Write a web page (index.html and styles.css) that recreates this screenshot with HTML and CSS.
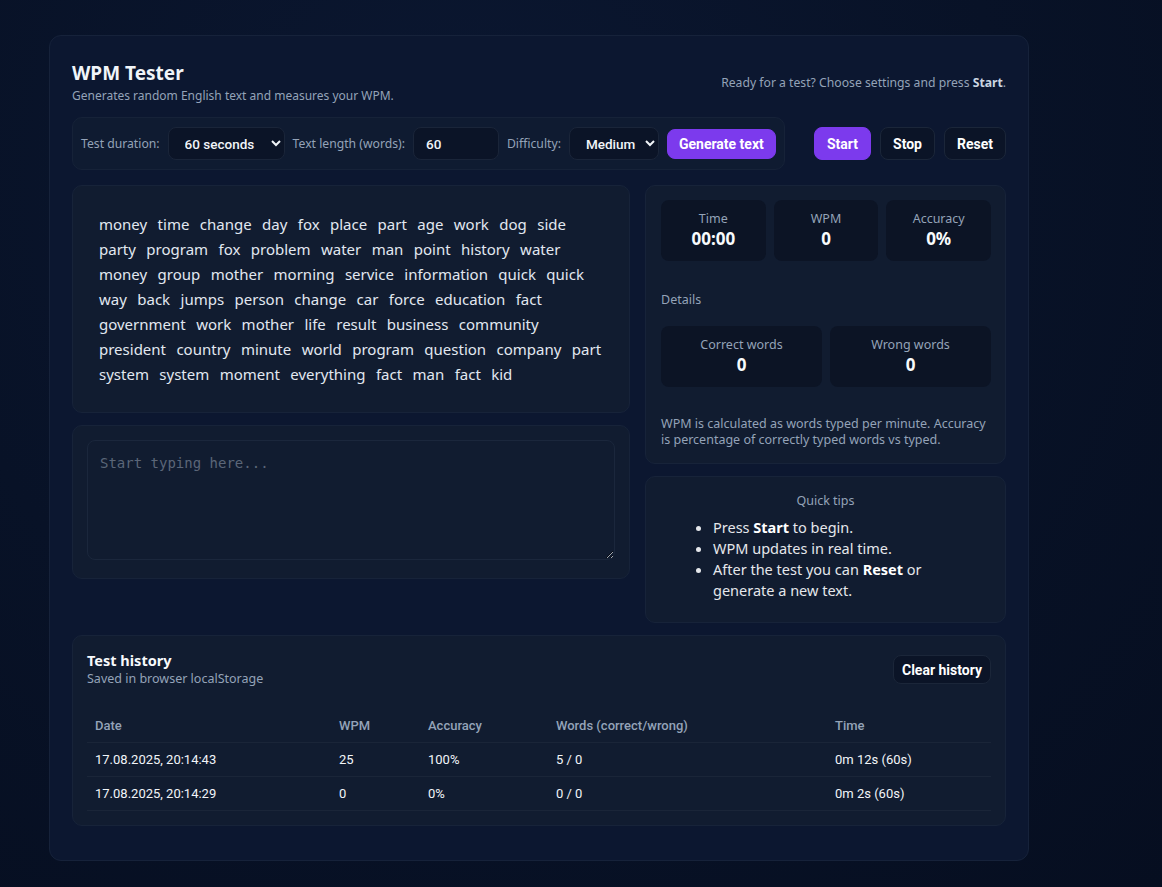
FILE: index.html
```html
<!DOCTYPE html>
<html lang="en">
<head>
<meta charset="utf-8">
<title>WPM Tester</title>
<link rel="stylesheet" href="styles.css">
</head>
<body>
<div class="app">
  <header class="head">
    <div>
      <h1 class="title">WPM Tester</h1>
      <p class="subtitle">Generates random English text and measures your WPM.</p>
    </div>
    <p class="status">Ready for a test? Choose settings and press <b>Start</b>.</p>
  </header>

  <div class="toolbar">
    <div class="controls">
      <label class="lbl">Test duration:</label>
      <select class="field sel-dur"><option>60 seconds</option></select>
      <label class="lbl">Text length (words):</label>
      <input class="field inp-len" type="text" value="60">
      <label class="lbl">Difficulty:</label>
      <select class="field sel-diff"><option>Medium</option></select>
      <button class="btn primary gen">Generate text</button>
    </div>
    <div class="actions">
      <button class="btn primary">Start</button>
      <button class="btn ghost">Stop</button>
      <button class="btn ghost">Reset</button>
    </div>
  </div>

  <div class="grid">
    <div class="col">
      <div class="panel words">
        <span>money</span> <span>time</span> <span>change</span> <span>day</span> <span>fox</span> <span>place</span> <span>part</span> <span>age</span> <span>work</span> <span>dog</span> <span>side</span>
        <span>party</span> <span>program</span> <span>fox</span> <span>problem</span> <span>water</span> <span>man</span> <span>point</span> <span>history</span> <span>water</span>
        <span>money</span> <span>group</span> <span>mother</span> <span>morning</span> <span>service</span> <span>information</span> <span>quick</span> <span>quick</span>
        <span>way</span> <span>back</span> <span>jumps</span> <span>person</span> <span>change</span> <span>car</span> <span>force</span> <span>education</span> <span>fact</span>
        <span>government</span> <span>work</span> <span>mother</span> <span>life</span> <span>result</span> <span>business</span> <span>community</span>
        <span>president</span> <span>country</span> <span>minute</span> <span>world</span> <span>program</span> <span>question</span> <span>company</span> <span>part</span>
        <span>system</span> <span>system</span> <span>moment</span> <span>everything</span> <span>fact</span> <span>man</span> <span>fact</span> <span>kid</span>
      </div>
      <div class="panel typing">
        <textarea class="ta" placeholder="Start typing here..."></textarea>
      </div>
    </div>

    <div class="col">
      <div class="panel stats">
        <div class="stat-row three">
          <div class="stat"><div class="s-lbl">Time</div><div class="s-val">00:00</div></div>
          <div class="stat"><div class="s-lbl">WPM</div><div class="s-val">0</div></div>
          <div class="stat"><div class="s-lbl">Accuracy</div><div class="s-val">0%</div></div>
        </div>
        <div class="details">Details</div>
        <div class="stat-row two">
          <div class="stat"><div class="s-lbl">Correct words</div><div class="s-val">0</div></div>
          <div class="stat"><div class="s-lbl">Wrong words</div><div class="s-val">0</div></div>
        </div>
        <p class="note">WPM is calculated as words typed per minute. Accuracy is percentage of correctly typed words vs typed.</p>
      </div>
      <div class="panel tips">
        <div class="tips-title">Quick tips</div>
        <ul class="tips-list">
          <li>Press <b>Start</b> to begin.</li>
          <li>WPM updates in real time.</li>
          <li>After the test you can <b>Reset</b> or generate a new text.</li>
        </ul>
      </div>
    </div>
  </div>

  <div class="panel history">
    <div class="hist-head">
      <div>
        <div class="hist-title">Test history</div>
        <div class="hist-sub">Saved in browser localStorage</div>
      </div>
      <button class="btn ghost clear">Clear history</button>
    </div>
    <table class="tbl">
      <thead>
        <tr><th class="c-date">Date</th><th class="c-wpm">WPM</th><th class="c-acc">Accuracy</th><th class="c-words">Words (correct/wrong)</th><th>Time</th></tr>
      </thead>
      <tbody>
        <tr><td>17.08.2025, 20:14:43</td><td>25</td><td>100%</td><td>5 / 0</td><td>0m 12s (60s)</td></tr>
        <tr><td>17.08.2025, 20:14:29</td><td>0</td><td>0%</td><td>0 / 0</td><td>0m 2s (60s)</td></tr>
      </tbody>
    </table>
  </div>
</div>
</body>
</html>
```

FILE: styles.css
```css
* { box-sizing: border-box; }
html, body { height: 100%; }
body {
  margin: 0;
  background: radial-gradient(ellipse at 40% 20%, #0b1731 0%, #081227 55%, #060e20 100%);
  color: #e5e7eb;
  font-family: "Noto Sans", "Open Sans", sans-serif;
  padding: 35px 133px 27px 49px;
}
.app {
  width: 980px;
  background: #0c1730;
  border: 1px solid #16223a;
  border-radius: 12px;
  padding: 23px 22px 34px 22px;
}
.head {
  display: flex;
  justify-content: space-between;
  align-items: center;
}
.title {
  margin: 0;
  font-size: 19px;
  font-weight: 700;
  line-height: 28px;
  color: #f1f5f9;
}
.subtitle {
  margin: 1px 0 0;
  font-size: 12px;
  line-height: 16px;
  color: #94a3b8;
}
.status {
  margin: 2px 0 0;
  font-size: 12.2px;
  color: #94a3b8;
}
.status b { color: #cbd5e1; }

.toolbar {
  margin-top: 13px;
  display: flex;
  justify-content: space-between;
  align-items: center;
}
.controls {
  display: flex;
  align-items: center;
  gap: 8px;
  background: #0f1b31;
  border: 1px solid #162238;
  border-radius: 10px;
  padding: 9px 8px 9px 8px;
}
.lbl {
  font-size: 12.2px;
  color: #94a3b8;
}
.field {
  height: 33px;
  background: #0b1427;
  border: 1px solid #1a2539;
  border-radius: 8px;
  color: #f1f5f9;
  font-family: Roboto, "Noto Sans", sans-serif;
  font-size: 13.5px;
  font-weight: 500;
  padding: 0 4px 0 12px;
}
.sel-dur { width: 117px; }
.inp-len { width: 86px; }
.sel-diff { width: 90px; }
.btn {
  font-family: Roboto, "Noto Sans", sans-serif;
  font-size: 14px;
  font-weight: 700;
  height: 33px;
  border-radius: 8px;
  padding: 0 12px;
  color: #ffffff;
  cursor: pointer;
}
.primary {
  background: #7c3aed;
  border: 1px solid #7c3aed;
}
.gen { height: 30px; padding: 0 11px; }
.ghost {
  background: #0b1427;
  border: 1px solid #1b2639;
}
.actions {
  display: flex;
  gap: 9px;
}

.grid {
  margin-top: 15px;
  display: grid;
  grid-template-columns: 1fr 361px;
  gap: 15px;
}
.col {
  display: flex;
  flex-direction: column;
  gap: 12px;
}
.panel {
  background: #111c30;
  border: 1px solid #172339;
  border-radius: 10px;
}
.words {
  padding: 26px 22px 25px 26px;
  font-size: 15px;
  line-height: 25px;
  color: #e2e8f0;
  word-spacing: 6.5px;
}
.typing {
  padding: 14px 14px 18px;
}
.ta {
  display: block;
  width: 100%;
  height: 120px;
  background: #111c30;
  border: 1px solid #1b273c;
  border-radius: 8px;
  color: #e5e7eb;
  font-family: "DejaVu Sans Mono", "Liberation Mono", monospace;
  font-size: 14px;
  padding: 14px 12px;
  resize: vertical;
}
.ta::placeholder { color: #5b6678; }

.stats {
  padding: 14px 14px 15px 15px;
}
.stat-row {
  display: grid;
  gap: 8px;
}
.three { grid-template-columns: 1fr 1fr 1fr; }
.two { grid-template-columns: 1fr 1fr; }
.stat {
  background: #0c1425;
  border-radius: 8px;
  height: 61px;
  text-align: center;
  padding-top: 10px;
}
.s-lbl {
  font-size: 12.5px;
  line-height: 18px;
  color: #94a3b8;
}
.s-val {
  font-size: 17px;
  line-height: 22px;
  font-weight: 700;
  color: #f8fafc;
}
.details {
  font-size: 12.5px;
  color: #94a3b8;
  margin: 30px 0 17px;
  line-height: 18px;
}
.note {
  margin: 29px 0 0;
  font-size: 12.5px;
  line-height: 16px;
  color: #94a3b8;
}
.tips {
  padding: 15px 16px 21px;
}
.tips-title {
  text-align: center;
  font-size: 12.5px;
  line-height: 18px;
  color: #94a3b8;
}
.tips-list {
  margin: 7px 0 0;
  padding: 0 58px 0 51px;
  font-size: 14.5px;
  line-height: 21px;
  color: #e5e7eb;
}
.tips-list b { color: #ffffff; }

.history {
  margin-top: 12px;
  padding: 14px 14px 14px;
}
.hist-head {
  display: flex;
  justify-content: space-between;
  align-items: flex-start;
}
.hist-title {
  font-size: 14.5px;
  font-weight: 700;
  line-height: 20px;
  color: #f8fafc;
}
.hist-sub {
  font-size: 12.5px;
  color: #94a3b8;
  line-height: 17px;
}
.clear {
  height: 29px;
  margin-top: 5px;
  padding: 0 8px;
}
.tbl {
  margin-top: 22px;
  width: 100%;
  border-collapse: collapse;
  font-family: Roboto, "Noto Sans", sans-serif;
  font-size: 13px;
}
.tbl th {
  text-align: left;
  font-weight: 500;
  color: #94a3b8;
  padding: 7px 8px;
  height: 33px;
  border-bottom: 1px solid #1a2538;
}
.tbl td {
  padding: 7px 8px;
  height: 34px;
  color: #f1f5f9;
  border-bottom: 1px solid #1a2538;
}
.c-date { width: 244px; }
.c-wpm { width: 89px; }
.c-acc { width: 128px; }
.c-words { width: 279px; }
```
